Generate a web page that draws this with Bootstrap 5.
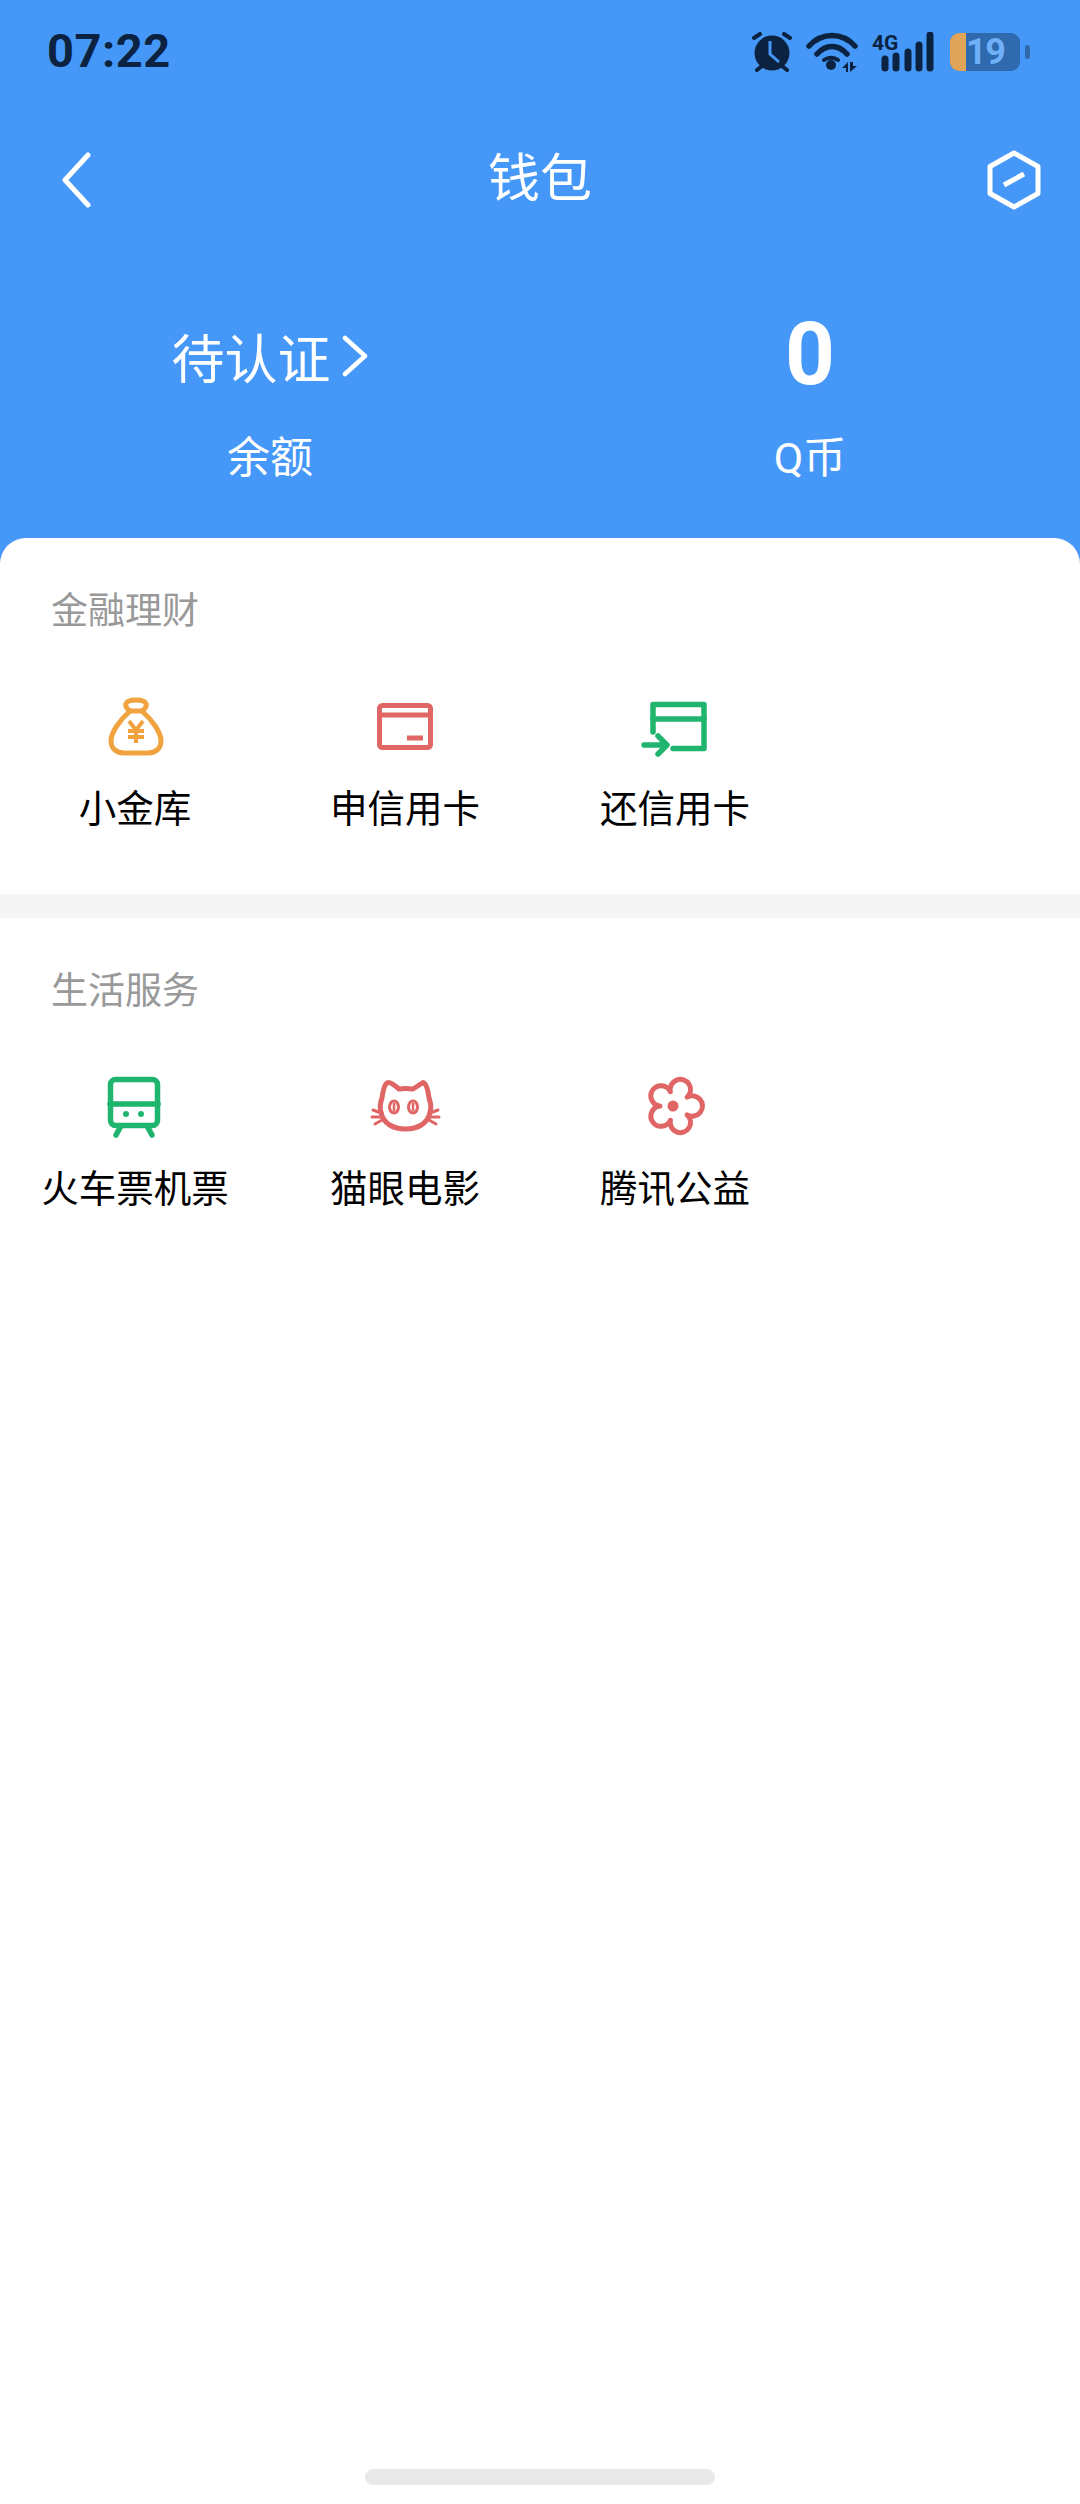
<!DOCTYPE html>
<html lang="zh-CN">
<head>
    <meta charset="UTF-8">
    <meta name="viewport" content="width=device-width, initial-scale=1.0">
    <title>钱包</title>
    <link href="https://cdn.jsdelivr.net/npm/bootstrap@5.3.0/dist/css/bootstrap.min.css" rel="stylesheet">
    <style>
        body { font-family: "Roboto", "Noto Sans CJK SC", sans-serif; background: #4598f8; }
        .wallet-page { width: 1080px; height: 2504px; }
        .wallet-head { height: 538px; color: #fff; }
        .status-bar { height: 104px; padding: 0 50px 0 47px; }
        .status-time { font-size: 47px; font-weight: 700; color: #0b2240; line-height: 1; letter-spacing: .5px; margin-bottom: 4px; }
        .status-icons { gap: 14px; }
        .batt-wrap { width: 80px; height: 38px; }
        .batt-body { width: 70px; height: 38px; background: #2f69ae; border-radius: 9px; }
        .batt-fill { left: 0; top: 0; width: 16px; height: 38px; background: #e0a458; border-radius: 9px 0 0 9px; }
        .batt-num { left: 16px; top: 0; font-size: 36px; font-weight: 700; line-height: 38px; letter-spacing: -1.500px; color: #6fb0f8; }
        .batt-nub { width: 5px; height: 14px; background: #2f69ae; border-radius: 3px; }
        .top-nav { height: 152px; padding: 0 39px; }
        .top-nav .side-slot { width: 140px; }
        .back-arrow { margin-left: 21px; }
        .top-title { font-size: 52px; line-height: 1; }
        .stat-row { margin-top: 48px; }
        .stat-value { height: 100px; }
        .pending-gap { gap: 10px; }
        .stat-pending { font-size: 53px; line-height: 1; padding-top: 14px; }
        .pending-arrow { margin-top: 4px; }
        .stat-zero { font-size: 87px; font-weight: 700; line-height: 1; }
        .stat-label { font-size: 43px; line-height: 1; margin-top: 33px; }
        .wallet-sheet { height: 1966px; background: #fff; border-radius: 26px 26px 0 0; }
        .wallet-section { height: 356px; padding-top: 52px; }
        .wallet-section + .wallet-section { border-top: 24px solid #f5f5f5; height: 380px; }
        .section-name { font-size: 37px; line-height: 44px; color: #999; padding-left: 51px; margin-bottom: 60px; }
        .tile-icon { height: 64px; }
        .tile-name { font-size: 37.500px; line-height: 44px; color: #000; margin-top: 29px; white-space: nowrap; }
        .home-bar { width: 350px; height: 16px; background: #e9e9e9; border-radius: 8px; margin-bottom: 19px; }
    </style>
</head>
<body class="m-0">
    <div class="wallet-page d-flex flex-column">
        <div class="wallet-head">
            <div class="status-bar d-flex justify-content-between align-items-center">
                <div class="status-time">07:22</div>
                <div class="status-icons d-flex align-items-center">
                    <!-- alarm -->
                    <svg width="40" height="40" viewBox="0 0 40 40">
                        <circle cx="20" cy="21" r="17.500" fill="#0b2240"/>
                        <path d="M2 6l6-4M38 6l-6-4M5 38l5-4M35 38l-5-4" stroke="#0b2240" stroke-width="4" stroke-linecap="round" fill="none"/>
                        <path d="M18 9v13l9 8" stroke="#4598f8" stroke-width="3" fill="none"/>
                    </svg>
                    <!-- wifi -->
                    <svg width="52" height="40" viewBox="0 0 52 40">
                        <path d="M3 14C16 0 36 0 49 14M11 22C20 12 32 12 41 22" stroke="#0b2240" stroke-width="5.500" stroke-linecap="round" fill="none"/>
                        <path d="M18 28c4-3 10-3 14 0" stroke="#0b2240" stroke-width="4" stroke-linecap="round" fill="none"/>
                        <circle cx="25" cy="33" r="5" fill="#0b2240"/>
                        <path d="M36 36l6-6v10h-2v-4zM44 30v10l7-6h-4v-4z" fill="#0b2240"/>
                    </svg>
                    <!-- 4G and signal -->
                    <svg width="64" height="40" viewBox="0 0 64 40">
                        <text x="0" y="18" font-family="Roboto" font-weight="700" font-size="21" fill="#0b2240">4G</text>
                        <path d="M13 27v9M24 24v12M36 20v16M47 13v23M58 3v33" stroke="#0b2240" stroke-width="7" stroke-linecap="round" fill="none"/>
                    </svg>
                    <!-- battery -->
                    <div class="batt-wrap d-flex align-items-center justify-content-between">
                        <div class="batt-body position-relative">
                            <div class="batt-fill position-absolute"></div>
                            <span class="batt-num position-absolute">19</span>
                        </div>
                        <div class="batt-nub"></div>
                    </div>
                </div>
            </div>
            <div class="top-nav d-flex justify-content-between align-items-center">
                <div class="side-slot">
                    <svg class="back-arrow d-block" width="32" height="56" viewBox="0 0 32 56"><path d="M28 3L5 28l23 25" stroke="#fff" stroke-width="5" stroke-linecap="round" stroke-linejoin="round" fill="none"/></svg>
                </div>
                <div class="top-title">钱包</div>
                <div class="side-slot d-flex justify-content-end">
                    <svg width="54" height="60" viewBox="0 0 54 60"><path d="M27 3l24 13.500v27L27 57 3 43.500v-27z" stroke="#fff" stroke-width="5" stroke-linejoin="round" fill="none"/><path d="M17 35l20-11" stroke="#fff" stroke-width="5" fill="none"/></svg>
                </div>
            </div>
            <div class="stat-row row g-0 text-center">
                <div class="col-6">
                    <div class="stat-value pending-gap d-flex justify-content-center align-items-center">
                        <span class="stat-pending">待认证</span>
                        <svg class="pending-arrow" width="28" height="42" viewBox="0 0 28 42"><path d="M4 3l20 18L4 39" stroke="#fff" stroke-width="4.500" stroke-linecap="round" stroke-linejoin="round" fill="none"/></svg>
                    </div>
                    <div class="stat-label">余额</div>
                </div>
                <div class="col-6">
                    <div class="stat-value d-flex justify-content-center align-items-center">
                        <span class="stat-zero">0</span>
                    </div>
                    <div class="stat-label">Q币</div>
                </div>
            </div>
        </div>
        <div class="wallet-sheet d-flex flex-column">
            <section class="wallet-section">
                <div class="section-name">金融理财</div>
                <div class="row g-0 text-center">
                    <div class="col-3">
                        <svg class="tile-icon" width="72" height="64" viewBox="0 0 72 64" fill="none" stroke="#f0a33e" stroke-width="5" stroke-linejoin="round" stroke-linecap="round">
                            <path d="M31 17C21 26 12 38 12 47c0 8 6 12 13 12h24c7 0 13-4 13-12 0-9-9-21-19-30"/>
                            <path d="M31 17c-6-4-7-11 6-11s12 7 6 11z"/>
                            <path d="M30 27l7 9 7-9M29 37h16M29 43h16M37 36v13" stroke-width="4" stroke-linecap="butt"/>
                        </svg>
                        <div class="tile-name">小金库</div>
                    </div>
                    <div class="col-3">
                        <svg class="tile-icon" width="72" height="64" viewBox="0 0 72 64" fill="none" stroke="#e06666" stroke-width="5" stroke-linejoin="round">
                            <rect x="10.500" y="11.500" width="51" height="42" rx="3"/>
                            <path d="M10 21h52"/>
                            <path d="M38 44h16"/>
                        </svg>
                        <div class="tile-name">申信用卡</div>
                    </div>
                    <div class="col-3">
                        <svg class="tile-icon" width="72" height="64" viewBox="0 0 72 64" fill="none" stroke="#1fb56e" stroke-width="5.500" stroke-linecap="round" stroke-linejoin="round">
                            <path d="M14 38V10.500h51V54.500H34"/>
                            <path d="M14 25h51"/>
                            <path d="M5 51h22M19 42l9 9-9 9"/>
                        </svg>
                        <div class="tile-name">还信用卡</div>
                    </div>
                </div>
            </section>
            <section class="wallet-section">
                <div class="section-name">生活服务</div>
                <div class="row g-0 text-center">
                    <div class="col-3">
                        <svg class="tile-icon" width="72" height="64" viewBox="0 0 72 64" fill="none" stroke="#1fb56e" stroke-width="5.500" stroke-linecap="round" stroke-linejoin="round">
                            <rect x="11.500" y="5.500" width="47" height="46" rx="5"/>
                            <path d="M11 30h48"/>
                            <path d="M22 52l-5 9M48 52l5 9"/>
                            <circle cx="27" cy="40" r="3" fill="#1fb56e" stroke="none"/>
                            <circle cx="42" cy="40" r="3" fill="#1fb56e" stroke="none"/>
                        </svg>
                        <div class="tile-name">火车票机票</div>
                    </div>
                    <div class="col-3">
                        <svg class="tile-icon" width="72" height="64" viewBox="0 0 72 64" fill="none" stroke="#e06666" stroke-width="5" stroke-linecap="round" stroke-linejoin="round">
                            <path d="M19 8.500Q22 8 30 15q6.500-1 14 0l10-6.500Q58 9 60 24q3 8 1 14C59 50 48 55 36.500 55S14 50 12 38q-2-6 1-14Q15 9 19 8.500z"/>
                            <ellipse cx="25" cy="33" rx="4.500" ry="6" stroke-width="3"/>
                            <ellipse cx="44" cy="33" rx="4.500" ry="6" stroke-width="3"/>
                            <path d="M25 30v6M44 30v6" stroke-width="2.500"/>
                            <path d="M4 36l8 3M3 43h9M6 50l7-4M69 36l-8 3M70 43h-9M67 50l-7-4" stroke-width="3"/>
                        </svg>
                        <div class="tile-name">猫眼电影</div>
                    </div>
                    <div class="col-3">
                        <svg class="tile-icon" width="72" height="64" viewBox="0 0 72 64" fill="none" stroke="#e06666" stroke-width="5" stroke-linejoin="round">
                            <path d="M21 32A10.200 10.200 0 1 1 31.400 17.700A10.200 10.200 0 1 1 48.100 23.200A10.200 10.200 0 1 1 48.100 40.800A10.200 10.200 0 1 1 31.400 46.300A10.200 10.200 0 1 1 21 32Z"/>
                            <circle cx="34" cy="32" r="5.500" fill="#e06666" stroke="none"/>
                        </svg>
                        <div class="tile-name">腾讯公益</div>
                    </div>
                </div>
            </section>
            <div class="home-bar mt-auto mx-auto"></div>
        </div>
    </div>
    <script src="https://cdn.jsdelivr.net/npm/bootstrap@5.3.0/dist/js/bootstrap.bundle.min.js"></script>
</body>
</html>
